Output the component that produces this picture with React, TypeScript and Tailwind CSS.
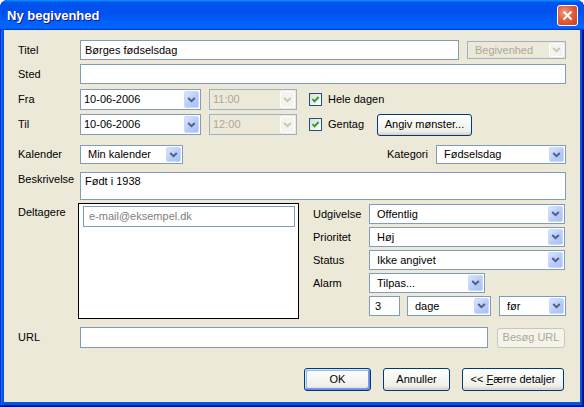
import type { ReactNode } from 'react'

function DropBtn({ disabled }: { disabled?: boolean }) {
  return (
    <div
      className={[
        'm-[1px] w-[15px] self-stretch rounded-[2px] flex items-center justify-center border',
        disabled
          ? 'bg-[#f4f3ee] border-white'
          : 'bg-[linear-gradient(135deg,#dbe5fe,#b9ccf8_55%,#a9c0f5)] border-[#c9d8fc]',
      ].join(' ')}
    >
      <svg width="9" height="6" viewBox="0 0 9 6">
        <path d="M1.2 1 L4.5 4.2 L7.8 1" stroke={disabled ? '#c9c7ba' : '#4d6185'} strokeWidth="2" fill="none" />
      </svg>
    </div>
  )
}

function Combo({ className, text, disabled, editable }: { className: string; text: string; disabled?: boolean; editable?: boolean }) {
  return (
    <div
      className={[
        'flex items-center border',
        disabled ? 'border-[#9fb1c6] bg-[#ece9d8] text-[#aca899]' : 'border-[#7f9db9] bg-white text-black',
        className,
      ].join(' ')}
    >
      <span className={['flex-1 truncate leading-[13px]', editable ? 'pl-[3px]' : 'pl-[7px]'].join(' ')}>{text}</span>
      <DropBtn disabled={disabled} />
    </div>
  )
}

function Input({ className, value }: { className: string; value?: string }) {
  return (
    <div className={['flex items-center border border-[#7f9db9] bg-white pl-[4px] leading-[13px]', className].join(' ')}>
      {value}
    </div>
  )
}

function Label({ className, children }: { className: string; children: ReactNode }) {
  return <div className={['shrink-0 leading-[13px]', className].join(' ')}>{children}</div>
}

function Check() {
  return (
    <div className="w-[13px] h-[13px] shrink-0 border border-[#1c5180] bg-[linear-gradient(135deg,#dcdcd7,#ffffff)] flex items-center justify-center">
      <svg width="9" height="9" viewBox="0 0 9 9">
        <path d="M1.5 4 L3.5 6.3 L7.6 2" stroke="#21a121" strokeWidth="1.9" fill="none" />
      </svg>
    </div>
  )
}

function Btn({ className, children, def, disabled }: { className: string; children: ReactNode; def?: boolean; disabled?: boolean }) {
  return (
    <div
      className={[
        'flex items-center justify-center rounded-[3px] border leading-[13px]',
        disabled
          ? 'border-[#c9c7ba] bg-[#f5f4ea] text-[#aca899]'
          : 'border-[#003c74] bg-[linear-gradient(180deg,#ffffff,#f0f0ea_80%,#d6d0c5)] text-black',
        def ? 'shadow-[inset_-1px_-1px_#6982ee,inset_1px_1px_#cee7ff,inset_-2px_-2px_#7d99f1,inset_2px_2px_#98b8ea]' : '',
        className,
      ].join(' ')}
    >
      <span className="whitespace-pre">{children}</span>
    </div>
  )
}

export default function App() {
  return (
    <div className="w-[584px] h-[407px] flex flex-col rounded-t-[8px] bg-[#0855dd] shadow-[inset_-1px_-1px_#00138c,inset_1px_1px_#0831d9,inset_-2px_-2px_#001ea0,inset_2px_2px_#166aee] font-['Liberation_Sans',Arial,sans-serif] text-[11px] text-black">
      {/* title bar */}
      <div className="h-[30px] shrink-0 flex items-center rounded-t-[8px] pl-[7px] pr-[6px] bg-[linear-gradient(180deg,#0997ff,#0053ee_8%,#0050ee_40%,#0066ff_88%,#0066ff_93%,#005bff_95%,#003dd7_96%,#003dd7)]">
        <span className="pt-[2px] text-[13px] font-bold text-white [text-shadow:1px_1px_#0f1089]">Ny begivenhed</span>
        <div className="ml-auto w-[21px] h-[21px] rounded-[3px] border border-white bg-[radial-gradient(circle_at_35%_35%,#f29a82,#e1603f_45%,#c5401e)] flex items-center justify-center">
          <svg width="11" height="11" viewBox="0 0 11 11">
            <path d="M1.5 1.5 L9.5 9.5 M9.5 1.5 L1.5 9.5" stroke="white" strokeWidth="2" />
          </svg>
        </div>
      </div>

      {/* body */}
      <div className="mx-[4px] mb-[5px] flex-1 bg-[#ece9d8] flex flex-col pl-[14px] pr-[14px] pt-[10px]">
        <div className="flex items-center h-[20px]">
          <Label className="w-[62px]">Titel</Label>
          <Input className="w-[379px] h-[20px]" value="Børges fødselsdag" />
          <Combo className="ml-[8px] w-[99px] h-[18px]" text="Begivenhed" disabled />
        </div>

        <div className="mt-[4px] flex items-center h-[20px]">
          <Label className="w-[62px]">Sted</Label>
          <Input className="w-[486px] h-[20px]" />
        </div>

        <div className="mt-[5px] flex items-center h-[21px]">
          <Label className="w-[62px]">Fra</Label>
          <Combo className="w-[121px] h-[21px]" text="10-06-2006" editable />
          <Combo className="ml-[8px] w-[88px] h-[21px]" text="11:00" editable disabled />
          <div className="ml-[12px] flex items-center gap-[6px]">
            <Check />
            <span className="leading-[13px]">Hele dagen</span>
          </div>
        </div>

        <div className="mt-[4px] flex items-center h-[21px]">
          <Label className="w-[62px]">Til</Label>
          <Combo className="w-[121px] h-[21px]" text="10-06-2006" editable />
          <Combo className="ml-[8px] w-[88px] h-[21px]" text="12:00" editable disabled />
          <div className="ml-[12px] w-[68px] flex items-center gap-[6px]">
            <Check />
            <span className="leading-[13px]">Gentag</span>
          </div>
          <Btn className="w-[95px] h-[22px]">Angiv mønster...</Btn>
        </div>

        <div className="mt-[10px] flex items-center h-[19px]">
          <Label className="w-[62px]">Kalender</Label>
          <Combo className="w-[103px] h-[19px]" text="Min kalender" />
          <div className="ml-auto flex items-center">
            <Label className="w-[49px]">Kategori</Label>
            <Combo className="w-[130px] h-[19px]" text="Fødselsdag" />
          </div>
        </div>

        <div className="mt-[8px] flex items-start h-[28px]">
          <Label className="w-[62px] pt-[1px]">Beskrivelse</Label>
          <div className="w-[486px] h-[28px] border border-[#7f9db9] bg-white pl-[4px] pt-[2px] leading-[13px]">Født i 1938</div>
        </div>

        <div className="mt-[3px] flex items-start">
          <Label className="w-[60px] pt-[3px]">Deltagere</Label>
          <div className="w-[222px] h-[116px] border border-black bg-white pl-[4px] pt-[2px]">
            <div className="w-[212px] h-[21px] border border-[#7f9db9] flex items-center pl-[5px] text-[#808080] leading-[13px]">e-mail@eksempel.dk</div>
          </div>
          <div className="ml-[14px] pt-[1px] flex flex-col gap-[3px]">
            <div className="flex items-center h-[20px]">
              <Label className="w-[56px]">Udgivelse</Label>
              <Combo className="w-[196px] h-[20px]" text="Offentlig" />
            </div>
            <div className="flex items-center h-[20px]">
              <Label className="w-[56px]">Prioritet</Label>
              <Combo className="w-[196px] h-[20px]" text="Høj" />
            </div>
            <div className="flex items-center h-[20px]">
              <Label className="w-[56px]">Status</Label>
              <Combo className="w-[196px] h-[20px]" text="Ikke angivet" />
            </div>
            <div className="flex items-center h-[20px]">
              <Label className="w-[56px]">Alarm</Label>
              <Combo className="w-[116px] h-[20px]" text="Tilpas..." />
            </div>
            <div className="flex items-center h-[20px] pl-[56px]">
              <div className="w-[31px] h-[20px] border border-[#7f9db9] bg-white pl-[5px] flex items-center leading-[13px]">3</div>
              <Combo className="ml-[7px] w-[84px] h-[20px]" text="dage" />
              <Combo className="ml-[8px] w-[67px] h-[20px]" text="før" />
            </div>
          </div>
        </div>

        <div className="mt-[8px] flex items-center h-[21px]">
          <Label className="w-[62px]">URL</Label>
          <Input className="w-[408px] h-[21px]" />
          <Btn className="ml-[9px] w-[68px] h-[20px]" disabled>Besøg URL</Btn>
        </div>

        <div className="mt-[20px] flex justify-end h-[23px] pr-[2px]">
          <Btn className="w-[67px] h-[23px]" def>OK</Btn>
          <Btn className="ml-[12px] w-[67px] h-[23px]">Annuller</Btn>
          <Btn className="ml-[12px] w-[102px] h-[23px]">
            {'<< '}<span className="underline">F</span>ærre detaljer
          </Btn>
        </div>
      </div>
    </div>
  )
}
